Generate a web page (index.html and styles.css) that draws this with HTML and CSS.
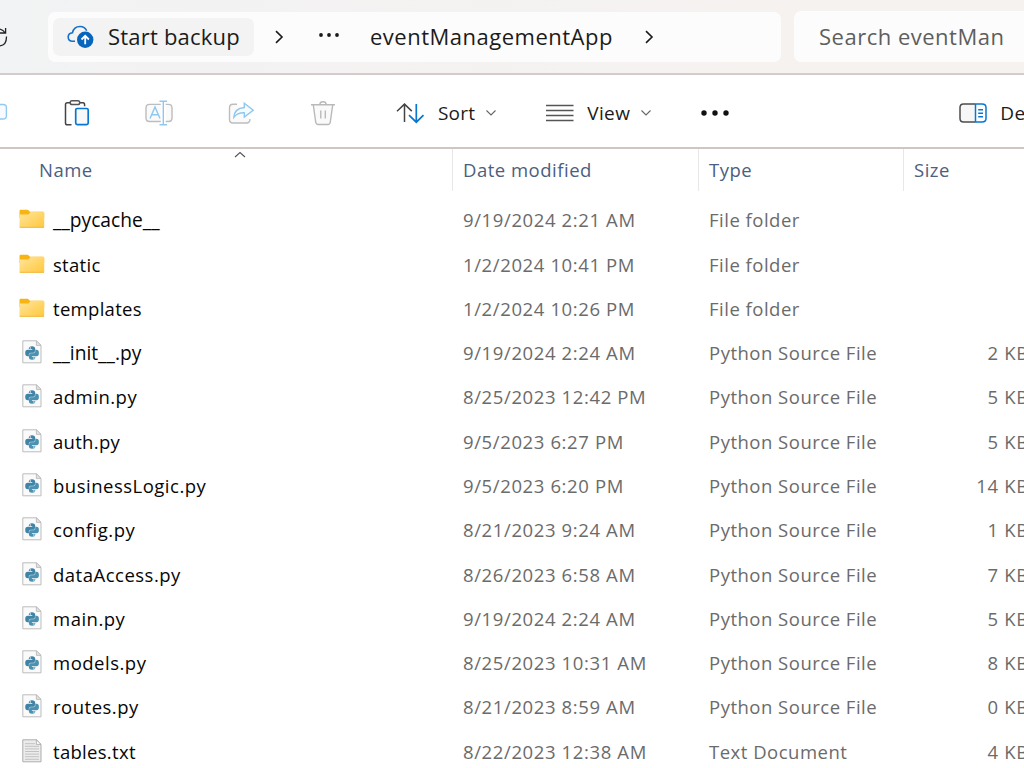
FILE: index.html
```
<!DOCTYPE html>
<html lang="en">
<head>
<meta charset="utf-8">
<title>eventManagementApp</title>
<link rel="stylesheet" href="styles.css">
</head>
<body>
<svg width="0" height="0" class="defs" aria-hidden="true">
  <defs>
    <linearGradient id="fold" x1="0" y1="0" x2="1" y2="1"><stop offset="0" stop-color="#ffe59c"/><stop offset="1" stop-color="#ffc83c"/></linearGradient>
    <symbol id="folder" viewBox="0 0 26 20">
      <path d="M.5 5V2Q.5.8 1.8.8h7l2.200 2H24Q25.200 2.800 25.200 4v5H.5z" fill="#f8b413"/>
      <path d="M.5 5.500h8.700L12 2.800h12Q25.200 2.800 25.200 4v13.600q0 1.200-1.200 1.200H1.700Q.5 18.800.5 17.600z" fill="url(#fold)"/>
      <path d="M.7 18.300h24.300" stroke="#efb63a" stroke-width=".9"/>
    </symbol>
    <symbol id="python" viewBox="0 0 20 24">
      <path d="M.8.8h13.600l4.600 4.600v17.400H.8z" fill="#fafafa" stroke="#bdbdbd"/>
      <path d="M14.400.8v4.600h4.600z" fill="#e4e4e4" stroke="#b5b5b5" stroke-width=".8"/>
      <path d="M6.800 8.800Q6.800 6.300 10 6.300t3.200 2.500v2.400Q13.200 13 11.200 13H8.800Q7 13 7 15v1.300H5.800Q3.200 16.300 3.200 13t2.600-3.300h4.500v-.6H6.800z" fill="#3f83a6"/>
      <path d="M13.300 17.200q0 2.500-3.200 2.500t-3.200-2.500v-2.400Q6.900 13 8.900 13h2.400q1.900 0 1.900-2V9.700h1.200q2.500 0 2.500 3.300t-2.500 3.300H9.900v.6h3.400z" fill="#4b91b1"/>
      <circle cx="8.300" cy="8" r=".65" fill="#fff"/><circle cx="11.900" cy="18" r=".65" fill="#fff"/>
      <path d="M7 15.500V15q0-2 1.800-2h2.400q2 0 2-2v-.5" fill="none" stroke="#b7d5e1" stroke-width=".6"/>
    </symbol>
    <symbol id="text" viewBox="0 0 20 24">
      <path d="M.8.8h13.600l4.600 4.600v17.400H.8z" fill="#ececec" stroke="#adadad"/>
      <path d="M14.400.8v4.600h4.600z" fill="#fff" stroke="#a5a5a5" stroke-width=".8"/>
      <path d="M3 4.700h10M3 7.300h14M3 9.900h14M3 12.500h14M3 15.100h14M3 17.700h14M3 20.300h14" stroke="#c2c2c2"/>
    </symbol>
  </defs>
</svg>
<div class="window">
  <header class="nav">
    <svg class="refresh" width="8" height="24" viewBox="0 0 8 24" fill="none" stroke="#222" stroke-width="1.300"><path d="M0 4.200Q3.200 5 5.300 8M5.600 3v5H0M6.500 11.500Q6.600 20.200 0 20.800"/></svg>
    <div class="address">
      <div class="backup">
        <svg width="27" height="24" viewBox="0 0 27 24" fill="none"><path d="M8 16.300H5.500Q1.200 16 1.200 12q0-3.800 4.300-4.300Q6.800 1.500 13 1.500q5 0 6.700 4.300" stroke="#1470c8" stroke-width="1.600"/><circle cx="18.200" cy="14.800" r="8.200" fill="#0765bd"/><path d="M18.200 19.300v-8.300M14.500 14.500l3.700-3.700 3.700 3.700" stroke="#fff" stroke-width="1.800"/></svg>
        <span>Start backup</span>
      </div>
      <svg class="sep" width="10" height="14" viewBox="0 0 10 14"><path d="M2 1.200L8 7l-6 5.800" fill="none" stroke="#1b1b1b" stroke-width="1.600"/></svg>
      <svg class="dots" width="22" height="6" viewBox="0 0 22 6" fill="#1b1b1b"><circle cx="3" cy="3" r="1.900"/><circle cx="11" cy="3" r="1.900"/><circle cx="19" cy="3" r="1.900"/></svg>
      <span class="crumb">eventManagementApp</span>
      <svg class="sep last" width="10" height="14" viewBox="0 0 10 14"><path d="M2 1.200L8 7l-6 5.800" fill="none" stroke="#1b1b1b" stroke-width="1.600"/></svg>
    </div>
    <div class="search"><span>Search eventManagementApp</span></div>
  </header>
  <div class="toolbar">
    <svg class="copy" width="8" height="28" viewBox="0 0 8 28"><path d="M-2 5.500h5q3.400 0 3.400 3v8.500q0 3-3.400 3h-5" fill="#f7fbff" stroke="#93c9f1" stroke-width="1.400"/></svg>
    <svg class="paste" width="28" height="28" viewBox="0 0 28 28" fill="none" stroke-width="1.500"><path d="M8.500 25.800H4.200Q2.500 25.800 2.500 24V5.500q0-1.800 1.800-1.800H7M17 3.700h3q1.600 0 1.600 2v1.500" stroke="#444"/><rect x="7.200" y="1.800" width="9.500" height="3.700" rx="1.800" stroke="#555"/><rect x="12.700" y="9.500" width="12.500" height="16.200" rx="1.600" fill="#f9f9f9" stroke="#0877d1" stroke-width="1.700"/></svg>
    <svg class="rename" width="28" height="28" viewBox="0 0 28 28" fill="none" stroke-width="1.400"><path d="M15.800 22.500H4.500Q1 22.500 1 19V9q0-3.600 3.500-3.600h11.300M20.700 5.400h2.800Q27 5.400 27 9v10q0 3.500-3.500 3.500h-2.800" fill="#fafafa" stroke="#bdbdbd"/><path d="M5 19.500l5-11.500 5 11.500M7 15.700h6M18.300 2.200v23.600M14.500 2.200h7.600M14.500 25.800h7.600" stroke="#8fc7ef"/></svg>
    <svg class="share" width="28" height="28" viewBox="0 0 28 28" fill="none" stroke-width="1.400"><path d="M10 5.300H6Q2.500 5.300 2.500 9v11.500Q2.500 24 6 24h13.500q3.500 0 3.500-4" fill="#fafafa" stroke="#bdbdbd"/><path d="M17.300 4.300L26.200 11.300 17.300 18v-4.200Q10.500 13.500 6.800 18.200 7.500 9.300 17.300 8.500z" fill="#f5faff" stroke="#8fc7ef"/></svg>
    <svg class="trash" width="28" height="28" viewBox="0 0 28 28" fill="none" stroke="#b9b9b9" stroke-width="1.400"><path d="M4.300 6L6.700 23q.3 2.500 2.500 2.500h9.600q2.200 0 2.500-2.500L23.700 6" fill="#fafafa"/><path d="M2 5.800h24M10.800 5.500Q11 2.700 14 2.700t3.200 2.800M11.800 11.500v8M16.300 11.500v8"/></svg>
    <div class="rule"></div>
    <div class="command sort">
      <svg width="30" height="24" viewBox="0 0 30 24" fill="none" stroke-width="1.500"><path d="M9.500 21V3.500M2 10.300l7.500-7.200 7.300 7" stroke="#444"/><path d="M21.300 3v17.800M14 14.200l7.300 7 7.200-7" stroke="#0877d1" stroke-width="1.700"/></svg>
      <span>Sort</span>
      <svg width="12" height="8" viewBox="0 0 12 8"><path d="M1.500 1.500L6 6l4.500-4.500" fill="none" stroke="#666" stroke-width="1.100"/></svg>
    </div>
    <div class="command view">
      <svg width="28" height="18" viewBox="0 0 28 18"><path d="M0 1.500h27.500M0 6.500h27.500M0 11.500h27.500M0 16.500h27.500" stroke="#555" stroke-width="1.500"/></svg>
      <span>View</span>
      <svg width="12" height="8" viewBox="0 0 12 8"><path d="M1.500 1.500L6 6l4.500-4.500" fill="none" stroke="#666" stroke-width="1.100"/></svg>
    </div>
    <svg class="more" width="28" height="8" viewBox="0 0 28 8" fill="#111"><circle cx="3" cy="4" r="2.700"/><circle cx="14" cy="4" r="2.700"/><circle cx="25" cy="4" r="2.700"/></svg>
    <div class="command details">
      <svg width="28" height="20" viewBox="0 0 28 20" fill="none" stroke-width="1.500"><path d="M16 1H4.500Q1 1 1 4.500v11Q1 19 4.500 19H16" fill="#f7f7f7" stroke="#4c4c4c"/><path d="M16.500 1H23q4 0 4 3.500v11q0 3.500-4 3.500h-6.500zM19.200 6.800h4.800M19.200 10.300h4.800M19.200 13.800h4.800" stroke="#0877d1"/></svg>
      <span>Details</span>
    </div>
  </div>
  <main class="list">
    <div class="head"><div class="c-name">Name<svg class="caret" width="12" height="8" viewBox="0 0 12 8"><path d="M1 6l5-4.500L11 6" fill="none" stroke="#555" stroke-width="1.100"/></svg></div><div>Date modified</div><div>Type</div><div>Size</div></div>
    <div class="rows">
      <div class="row"><svg class="folder"><use href="#folder"/></svg><span class="name dunder">__pycache__</span><span class="date">9/19/2024 2:21 AM</span><span>File folder</span><span></span></div>
      <div class="row"><svg class="folder"><use href="#folder"/></svg><span class="name short">static</span><span class="date">1/2/2024 10:41 PM</span><span>File folder</span><span></span></div>
      <div class="row"><svg class="folder"><use href="#folder"/></svg><span class="name short">templates</span><span class="date">1/2/2024 10:26 PM</span><span>File folder</span><span></span></div>
      <div class="row"><svg class="file"><use href="#python"/></svg><span class="name dunder">__init__.py</span><span class="date">9/19/2024 2:24 AM</span><span>Python Source File</span><span class="size">2 KB</span></div>
      <div class="row"><svg class="file"><use href="#python"/></svg><span class="name">admin.py</span><span class="date">8/25/2023 12:42 PM</span><span>Python Source File</span><span class="size">5 KB</span></div>
      <div class="row"><svg class="file"><use href="#python"/></svg><span class="name short">auth.py</span><span class="date">9/5/2023 6:27 PM</span><span>Python Source File</span><span class="size">5 KB</span></div>
      <div class="row"><svg class="file"><use href="#python"/></svg><span class="name">businessLogic.py</span><span class="date">9/5/2023 6:20 PM</span><span>Python Source File</span><span class="size">14 KB</span></div>
      <div class="row"><svg class="file"><use href="#python"/></svg><span class="name">config.py</span><span class="date">8/21/2023 9:24 AM</span><span>Python Source File</span><span class="size">1 KB</span></div>
      <div class="row"><svg class="file"><use href="#python"/></svg><span class="name">dataAccess.py</span><span class="date">8/26/2023 6:58 AM</span><span>Python Source File</span><span class="size">7 KB</span></div>
      <div class="row"><svg class="file"><use href="#python"/></svg><span class="name">main.py</span><span class="date">9/19/2024 2:24 AM</span><span>Python Source File</span><span class="size">5 KB</span></div>
      <div class="row"><svg class="file"><use href="#python"/></svg><span class="name">models.py</span><span class="date">8/25/2023 10:31 AM</span><span>Python Source File</span><span class="size">8 KB</span></div>
      <div class="row"><svg class="file"><use href="#python"/></svg><span class="name">routes.py</span><span class="date">8/21/2023 8:59 AM</span><span>Python Source File</span><span class="size">0 KB</span></div>
      <div class="row"><svg class="file"><use href="#text"/></svg><span class="name short">tables.txt</span><span class="date">8/22/2023 12:38 AM</span><span>Text Document</span><span class="size">4 KB</span></div>
    </div>
  </main>
</div>
</body>
</html>
```
FILE: styles.css
```
* { box-sizing: border-box; }
body { margin: 0; background: #fff; font-family: "Open Sans", "Noto Sans", sans-serif; overflow: hidden; }
svg { display: block; flex: none; }
.defs { position: absolute; }
.window { width: 1024px; height: 768px; overflow: hidden; display: flex; flex-direction: column; white-space: nowrap; }

.nav { flex: none; height: 75px; display: flex; align-items: flex-start; background: linear-gradient(90deg, #f1f3f4, #f4f2f2 30%, #f6f2f0); border-bottom: 2px solid #d4cbca; font-size: 22px; color: #1b1b1b; }
.refresh { margin-top: 25px; }
.address { flex: none; width: 733px; height: 50px; margin: 12px 13px 0 40px; padding-left: 5px; display: flex; align-items: center; background: #fdfcfd; border-radius: 7px; }
.backup { width: 201px; height: 38px; padding-left: 14px; display: flex; align-items: center; gap: 14px; background: #f3f3f3; border-radius: 7px; letter-spacing: .2px; }
.backup span, .crumb { padding-bottom: 2px; }
.sep { margin-left: 20px; }
.dots { margin: -4px 0 0 34px; }
.crumb { width: 242px; margin-left: 30px; letter-spacing: .5px; }
.sep.last { margin-left: 32px; }
.search { flex: 1; min-width: 0; height: 51px; margin-top: 11px; padding: 0 20px 0 25px; display: flex; align-items: center; background: #fdfcfd; border-radius: 7px 0 0 7px; color: #5e5e5e; letter-spacing: .5px; }
.search span { min-width: 0; overflow: hidden; padding-bottom: 1px; }

.toolbar { flex: none; height: 74px; display: flex; align-items: center; border-bottom: 2px solid #cfc6c4; padding-top: 4px; font-size: 19px; color: #1b1b1b; }
.paste { margin-left: 55px; }
.rename, .share, .trash { margin-left: 54px; }
.rule { width: 2px; height: 49px; margin-left: 32px; background: #ededed; margin-top: -4px; }
.command { display: flex; align-items: center; }
.sort { margin-left: 26px; width: 104px; }
.sort span { margin: 0 10px 0 13px; letter-spacing: .2px; }
.view { margin-left: 49px; width: 109px; }
.view span { margin: 0 10px 0 13px; letter-spacing: .4px; }
.more { margin-left: 49px; }
.details { margin-left: 230px; gap: 13px; }
.details span { letter-spacing: .5px; }

.list { flex: 1; font-size: 18.500px; letter-spacing: .5px; color: #6b6b6b; }
.head { height: 41px; display: grid; grid-template-columns: 453px 246px 205px 120px; line-height: 42px; color: #4b6080; }
.head > div { padding-left: 10px; border-right: 1px solid #e7e7e7; }
.head > div:last-child { border-right: 0; }
.head > .c-name { padding-left: 39px; position: relative; }
.caret { position: absolute; left: 234px; top: 2px; }
.rows { padding-top: 8.200px; }
.row { height: 44.290px; display: grid; grid-template-columns: 53px 410px 246px 205px 115px; align-items: center; }
.row span { padding-bottom: 1px; }
.name { color: #060606; }
.name.short { letter-spacing: .3px; }
.name.dunder { font-size: 19.200px; letter-spacing: 0; }
.date { letter-spacing: .62px; }
.folder { width: 26px; height: 20px; margin: -2px 0 0 19px; }
.file { width: 20px; height: 24px; margin: -2px 0 0 22px; }
.size { text-align: right; letter-spacing: .7px; }
```
